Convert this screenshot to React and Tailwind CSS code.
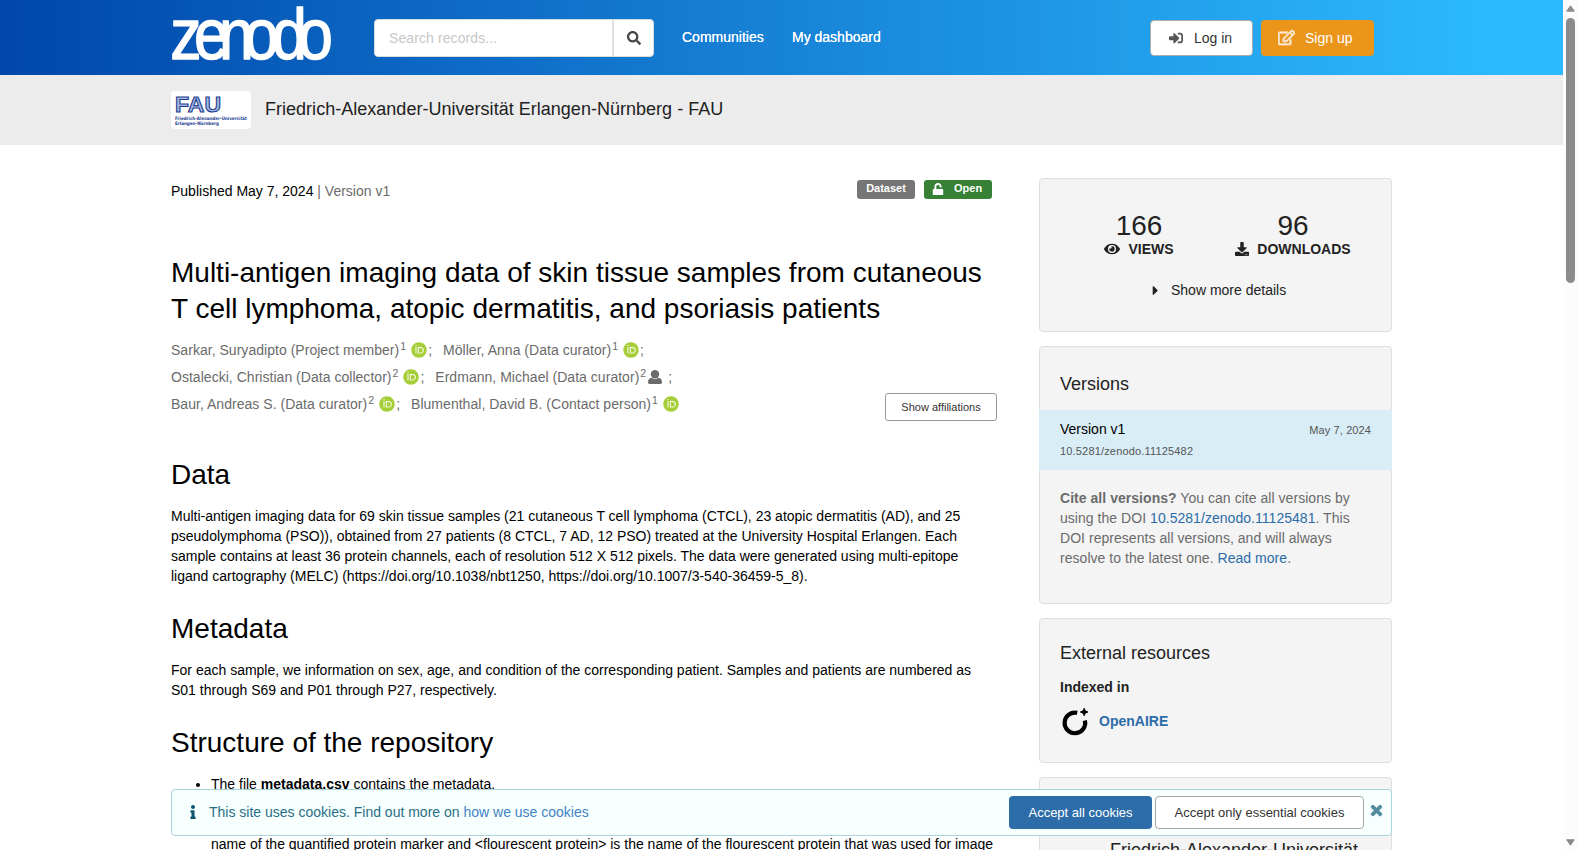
import React from 'react';
import {
  FaSearch, FaSignInAlt, FaRegEdit, FaUnlock, FaEye, FaDownload,
  FaCaretRight, FaInfo, FaTimes, FaOrcid,
} from 'react-icons/fa';

const creators = [
  [
    { name: 'Sarkar, Suryadipto (Project member)', aff: 1, orcid: true },
    { name: 'Möller, Anna (Data curator)', aff: 1, orcid: true },
  ],
  [
    { name: 'Ostalecki, Christian (Data collector)', aff: 2, orcid: true },
    { name: 'Erdmann, Michael (Data curator)', aff: 2, orcid: false },
  ],
  [
    { name: 'Baur, Andreas S. (Data curator)', aff: 2, orcid: true },
    { name: 'Blumenthal, David B. (Contact person)', aff: 1, orcid: true, last: true },
  ],
];

function App() {
  return (
    <div className="relative flex h-[850px] w-[1578px] overflow-hidden bg-white font-['Liberation_Sans',Arial,sans-serif] text-[14px] leading-5 text-black">
      <div className="w-[1563px] shrink-0">
        <Header />
        <CommunityBar />
        <div className="ml-[171px] flex w-[1221px] items-start justify-between">
          <Record />
          <Sidebar />
        </div>
      </div>
      <Scrollbar />
      <CookieBanner />
    </div>
  );
}

const Header = () => (
  <header className="flex h-[75px] items-center bg-[linear-gradient(90deg,#0047ab_0%,#2cbaff_96%)] pl-[171px]">
    <ZenodoLogo />
    <div className="ml-[43px] flex h-[38px] w-[280px] rounded border border-[#d9dbdc] bg-white">
      <div className="flex w-[237px] items-center pl-[14px] tracking-[0.1px] text-[#c7c7c7]">Search records...</div>
      <button className="flex flex-1 items-center justify-center border-l-2 border-[#e0e1e2] text-[#444]">
        <FaSearch size={14} />
      </button>
    </div>
    <nav className="mb-px ml-[28px] flex gap-[28px] whitespace-nowrap text-[14px] text-white [text-shadow:0_0_0.5px_#fff]">
      <a className="w-[82px]">Communities</a>
      <a>My dashboard</a>
    </nav>
    <div className="ml-auto mr-[189px] flex gap-2">
      <button className="flex h-9 w-[103px] items-center rounded-[4px] border border-[#a8adb0] bg-white pl-[18px] text-[#333]">
        <FaSignInAlt size={14} className="mr-[11px] text-[#555]" />Log in
      </button>
      <button className="flex h-9 w-[113px] items-center rounded-[4px] bg-[#ec951b] pl-[17px] text-white">
        <FaRegEdit size={17} className="mr-[10px] opacity-80" stroke="#fff" strokeWidth="22" />Sign up
      </button>
    </div>
  </header>
);

// Letters are placed one by one so that neighbouring strokes join
const ZenodoLogo = () => (
  <svg width="160" height="75" viewBox="0 0 160 75" className="shrink-0 overflow-visible">
    <text
      transform="scale(0.87 1)" x="-0.8 26.4 55.1 83.9 116.2 146" y="59" fontSize="72"
      fill="#fff" stroke="#fff" strokeWidth="1.4" strokeLinejoin="round"
    >
      zenodo
    </text>
  </svg>
);

const CommunityBar = () => (
  <div className="flex h-[70px] items-center bg-[#ececec] pl-[171px]">
    <svg width="80" height="38" viewBox="0 0 80 38" className="mr-[14px] rounded bg-white">
      <text x="4" y="20.500" fontSize="22" fontWeight="bold" textLength="46" lengthAdjust="spacingAndGlyphs" fill="#a9b9dd" stroke="#1f3f94" strokeWidth="1.100">FAU</text>
      <text x="4" y="28.500" fontSize="4.700" fontWeight="bold" textLength="72" lengthAdjust="spacingAndGlyphs" fontFamily="DejaVu Sans" fill="#1f3f94">Friedrich-Alexander-Universität</text>
      <text x="4" y="34.200" fontSize="4.700" fontWeight="bold" textLength="44" lengthAdjust="spacingAndGlyphs" fontFamily="DejaVu Sans" fill="#1f3f94">Erlangen-Nürnberg</text>
    </svg>
    <span className="mb-[2px] whitespace-nowrap text-[18px] tracking-[0.02px] text-[#222]">Friedrich-Alexander-Universität Erlangen-Nürnberg - FAU</span>
  </div>
);

const Record = () => (
  <main className="w-[826px] whitespace-nowrap">
    <div className="mt-[34px] flex h-[22px] items-start">
      <div className="pt-[2px]">Published May 7, 2024 <span className="text-[#6b6b6b]">| Version v1</span></div>
      <div className="ml-auto mr-[5px] mt-px flex gap-[9px] text-[11px] font-bold leading-[17px] text-white">
        <span className="h-[19px] w-[58px] rounded-[3px] bg-[#767676] text-center">Dataset</span>
        <span className="flex h-[19px] w-[68px] rounded-[3px] bg-[#378137] pl-[8px]">
          <FaUnlock size={12} className="mr-[10px] mt-[3px]" />Open
        </span>
      </div>
    </div>

    <h1 className="mt-[54px] text-[28px] leading-[36px]">
      Multi-antigen imaging data of skin tissue samples from cutaneous<br />
      T cell lymphoma, atopic dermatitis, and psoriasis patients
    </h1>

    <div className="mt-[9px] flex items-end justify-between">
      <div className="tracking-[0.03px] text-[#6b6b6b]">
        {creators.map((line, i) => (
          <div key={i} className="flex h-[27px] items-center gap-[11px]">
            {line.map((c) => <Creator key={c.name} {...c} />)}
          </div>
        ))}
      </div>
      <button className="mb-[-4px] h-7 w-[112px] rounded-[3px] border border-[#999] text-[11px] text-[#333]">Show affiliations</button>
    </div>

    <SectionTitle className="mt-[40px]">Data</SectionTitle>
    <p className="mt-[13px]">
      Multi-antigen imaging data for 69 skin tissue samples (21 cutaneous T cell lymphoma (CTCL), 23 atopic dermatitis (AD), and 25<br />
      pseudolymphoma (PSO)), obtained from 27 patients (8 CTCL, 7 AD, 12 PSO) treated at the University Hospital Erlangen. Each<br />
      sample contains at least 36 protein channels, each of resolution 512 X 512 pixels. The data were generated using multi-epitope<br />
      ligand cartography (MELC) (https://doi.org/10.1038/nbt1250, https://doi.org/10.1007/3-540-36459-5_8).
    </p>
    <SectionTitle className="mt-[25px]">Metadata</SectionTitle>
    <p className="mt-[13px]">
      For each sample, we information on sex, age, and condition of the corresponding patient. Samples and patients are numbered as<br />
      S01 through S69 and P01 through P27, respectively.
    </p>
    <SectionTitle className="mt-[25px]">Structure of the repository</SectionTitle>
    <ul className="mt-[13px] list-disc pl-10">
      <li>The file <b>metadata.csv</b> contains the metadata.</li>
    </ul>
    <p className="mt-10 pl-10">name of the quantified protein marker and &lt;flourescent protein&gt; is the name of the flourescent protein that was used for image</p>
  </main>
);

const SectionTitle = ({ children, className }) => (
  <h2 className={`text-[28px] leading-9 ${className}`}>{children}</h2>
);

const UserIcon = () => (
  <svg width="14" height="14" viewBox="0 0 14 14" fill="currentColor" className="ml-[2px] mr-[5px]">
    <circle cx="7" cy="4.200" r="4.200" />
    <path d="M3.600 7.800Q7 10.600 10.400 7.800Q14 8.600 14 12.200Q14 14 12.500 14H1.500Q0 14 0 12.200Q0 8.600 3.600 7.800Z" />
  </svg>
);

const Creator = ({ name, aff, orcid, last }) => (
  <span className="flex items-center">
    {name}
    <sup className="relative -top-[3px] ml-px text-[10.5px] leading-none">{aff}</sup>
    {orcid ? <FaOrcid size={16} className="ml-[5px] text-[#a6ce39]" /> : <UserIcon />}
    {!last && <span className="ml-[1px]">;</span>}
  </span>
);

const Panel = ({ children, className }) => (
  <section className={`rounded border border-[#dfdfe0] bg-[#f4f4f4] ${className}`}>{children}</section>
);

const Sidebar = () => (
  <aside className="mt-[33px] flex w-[353px] flex-col gap-[14px] whitespace-nowrap text-[#222]">
    <Panel className="h-[154px] pt-[33px]">
      <div className="flex">
        <Stat value="166" label="VIEWS" icon={<FaEye size={16} />} className="ml-[54px] w-[90px]" />
        <Stat value="96" label="DOWNLOADS" icon={<FaDownload size={14} />} className="ml-[44px] w-[130px]" />
      </div>
      <div className="mt-[22px] flex items-center pl-[108px]">
        <FaCaretRight size={15} className="mr-[8px]" />Show more details
      </div>
    </Panel>

    <Panel className="h-[258px]">
      <h3 className="mt-[27px] pl-[20px] text-[18px] leading-5">Versions</h3>
      <div className="-mx-px mt-[16px] h-[60px] bg-[#d9edf7] pl-[21px] pr-[21px] pt-[9px]">
        <div className="flex justify-between text-black">
          <span>Version v1</span>
          <span className="mt-px text-[11px] tracking-[0.1px] text-[#555]">May 7, 2024</span>
        </div>
        <div className="mt-px text-[11px] tracking-[0.17px] text-[#555]">10.5281/zenodo.11125482</div>
      </div>
      <p className="mt-[18px] pl-[20px] tracking-[0.04px] text-[#6b6b6b]">
        <b>Cite all versions?</b> You can cite all versions by<br />
        using the DOI <a className="text-[#2c6ca9]">10.5281/zenodo.11125481</a>. This<br />
        DOI represents all versions, and will always<br />
        resolve to the latest one. <a className="text-[#2c6ca9]">Read more</a>.
      </p>
    </Panel>

    <Panel className="h-[145px] pl-[20px] pt-[24px]">
      <h3 className="text-[18px] leading-5">External resources</h3>
      <h4 className="mt-[14px] font-bold">Indexed in</h4>
      <div className="mt-[10px] flex items-center">
        <svg width="30" height="30" viewBox="0 0 30 30" fill="none">
          <path d="M17.200 5.900A10.300 10.300 0 1 0 24.900 13.500" stroke="#000" strokeWidth="4.200" />
          <path d="M24.200 1.300Q24.700 4.500 28 5Q24.700 5.500 24.200 8.700Q23.700 5.500 20.400 5Q23.700 4.500 24.200 1.300Z" fill="#000" stroke="#000" />
        </svg>
        <b className="mb-[2px] ml-[9px] text-[#2c6ca9]">OpenAIRE</b>
      </div>
    </Panel>

    <Panel className="h-[200px] pl-[37px] pt-[60px] text-center text-[18px] leading-6">Friedrich-Alexander-Universität</Panel>
  </aside>
);

const Stat = ({ value, label, icon, className }) => (
  <div className={`flex flex-col items-center ${className}`}>
    <span className="text-[28px] leading-7">{value}</span>
    <span className="flex h-[18px] items-center gap-2 font-bold">{icon}{label}</span>
  </div>
);

const Scrollbar = () => (
  <div className="flex w-[15px] flex-col items-center bg-[#fcfcfc] pt-[5px]">
    <svg width="9" height="7" viewBox="0 0 9 7"><path d="M4.500 .8L8.300 6.200H.7Z" fill="#8b8b8b" stroke="#8b8b8b" strokeLinejoin="round" /></svg>
    <div className="mt-[6px] h-[265px] w-[9px] rounded-full bg-[#8b8b8b]" />
    <svg width="9" height="7" viewBox="0 0 9 7" className="mb-[4px] mt-auto"><path d="M4.500 6.200L8.300 .8H.7Z" fill="#8b8b8b" stroke="#8b8b8b" strokeLinejoin="round" /></svg>
  </div>
);

const CookieBanner = () => (
  <div className="absolute left-[171px] top-[789px] flex h-[47px] w-[1221px] items-center whitespace-nowrap rounded border border-[#a9d5de] bg-[#f8ffff] text-[#276f86]">
    <FaInfo size={14} className="mb-px ml-[14px] mr-[9px] text-[#0e566c]" />
    <span className="mb-px">This site uses cookies. Find out more on <a className="text-[#4183c4]">how we use cookies</a></span>
    <button className="ml-auto h-[33px] w-[143px] rounded-[4px] bg-[#2c6ca9] text-[13px] text-white">Accept all cookies</button>
    <button className="ml-[3px] h-[33px] w-[209px] rounded-[4px] border border-[#a5a5a5] bg-white text-[13px] text-[#333]">Accept only essential cookies</button>
    <FaTimes size={15} className="mb-[5px] ml-[5px] mr-[7px] overflow-visible text-[#528c9e]" stroke="currentColor" strokeWidth="36" />
  </div>
);

export default App;
